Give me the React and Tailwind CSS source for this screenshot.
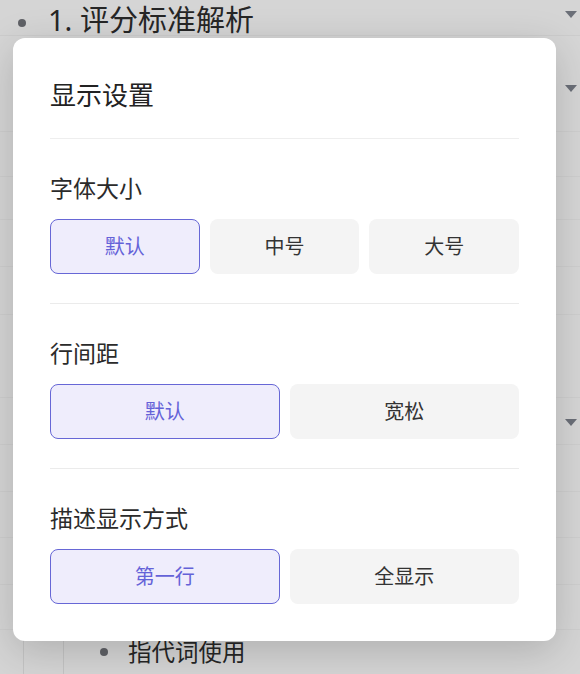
import React, { useState } from "react";

const FONT = { fontFamily: '"Noto Sans", "Noto Sans CJK SC", sans-serif' };

// rows of the page behind the dimmed overlay
const BG_ROWS = [
  { h: 96, arrow: 52 },
  { h: 45 },
  { h: 43 },
  { h: 47 },
  { h: 48 },
  { h: 83 },
  { h: 47, arrow: 24 },
  { h: 47 },
  { h: 46 },
  { h: 47 },
  { h: 45 },
];

const SECTIONS = [
  { key: "size", label: "字体大小", options: ["默认", "中号", "大号"] },
  { key: "spacing", label: "行间距", options: ["默认", "宽松"] },
  { key: "desc", label: "描述显示方式", options: ["第一行", "全显示"] },
];

const Arrow = () => (
  <svg width="12" height="7" viewBox="0 0 12 7" className="block">
    <path d="M0 0 H12 L6 7 Z" fill="#6b6f78" />
  </svg>
);

const OptionGroup = ({ options, value, onChange }) => (
  <div className={`grid gap-[10px] ${options.length === 3 ? "grid-cols-3" : "grid-cols-2"}`}>
    {options.map((opt) => {
      const active = opt === value;
      return (
        <button
          key={opt}
          onClick={() => onChange(opt)}
          className={`h-[55px] rounded-[8px] text-[20px] ${
            active
              ? "border-[1.5px] border-[#6767d6] bg-[#efedfc] text-[#6462d8]"
              : "border-[1.5px] border-transparent bg-[#f4f4f4] text-[#333]"
          }`}
        >
          {opt}
        </button>
      );
    })}
  </div>
);

export default function App() {
  const [settings, setSettings] = useState({ size: "默认", spacing: "默认", desc: "第一行" });

  return (
    <div className="relative h-[674px] w-full overflow-hidden bg-[#d5d5d5]" style={FONT}>
      {/* page behind the overlay */}
      <div className="flex h-[36px] items-start border-b border-[#cdcdcd]">
        <span className="ml-[18px] mt-[19px] h-[8px] w-[8px] rounded-full bg-[#5f6166]" />
        <span className="ml-[22px] text-[29px] leading-[40px] text-[#262626]">1. 评分标准解析</span>
        <span className="ml-auto mr-[3px] mt-[11px]">
          <Arrow />
        </span>
      </div>
      {BG_ROWS.map((row, i) => (
        <div
          key={i}
          className="flex justify-end border-b border-[#cfcfcf] bg-[#d6d6d6]"
          style={{ height: row.h }}
        >
          {row.arrow && (
            <span className="mr-[3px]" style={{ marginTop: row.arrow - 3 }}>
              <Arrow />
            </span>
          )}
        </div>
      ))}
      <div className="flex h-[44px]">
        <div className="w-[24px] border-r border-[#c4c4c4]" />
        <div className="w-[40px] border-r border-[#c4c4c4]" />
        <div className="flex items-center">
          <span className="ml-[36px] h-[8px] w-[8px] rounded-full bg-[#5f6166]" />
          <span className="ml-[20px] text-[23.5px] leading-[30px] text-[#262626]">指代词使用</span>
        </div>
      </div>

      {/* dialog */}
      <div className="absolute left-[13px] top-[38px] w-[543px] rounded-[12px] bg-white px-[37px] pb-[37px] pt-[41px] shadow-[0_10px_40px_rgba(0,0,0,0.18)]">
        <h2 className="text-[26px] font-normal leading-[32px] text-[#222]">显示设置</h2>
        <div className="mt-[27px] border-t border-[#eeeeee]" />
        {SECTIONS.map((sec, i) => (
          <div key={sec.key}>
            {i > 0 && <div className="mt-[29px] border-t border-[#ebebeb]" />}
            <div className="mt-[34px] text-[23px] leading-[30px] text-[#2b2b2b]">{sec.label}</div>
            <div className="mt-[16px]">
              <OptionGroup
                options={sec.options}
                value={settings[sec.key]}
                onChange={(v) => setSettings({ ...settings, [sec.key]: v })}
              />
            </div>
          </div>
        ))}
      </div>
    </div>
  );
}
